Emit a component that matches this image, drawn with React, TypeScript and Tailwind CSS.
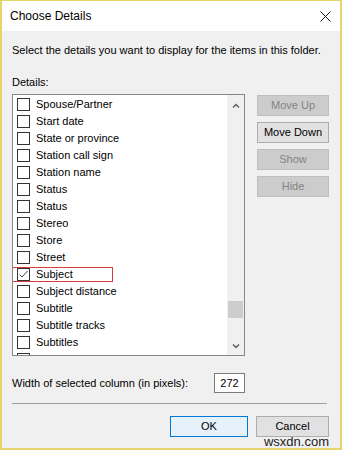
import { ReactNode } from 'react';

const items = [
  'Spouse/Partner',
  'Start date',
  'State or province',
  'Station call sign',
  'Station name',
  'Status',
  'Status',
  'Stereo',
  'Store',
  'Street',
  'Subject',
  'Subject distance',
  'Subtitle',
  'Subtitle tracks',
  'Subtitles',
  '',
];

function CheckBox({ checked }: { checked?: boolean }) {
  return (
    <span className="flex h-[13px] w-[13px] shrink-0 items-center justify-center border border-[#333333] bg-white">
      {checked ? (
        <svg width="11" height="11" viewBox="0 0 11 11">
          <path d="M1.5 5.5 L4 8 L9.5 2" fill="none" stroke="#444" strokeWidth="1" />
        </svg>
      ) : null}
    </span>
  );
}

function Button({ children, disabled, primary }: { children: ReactNode; disabled?: boolean; primary?: boolean }) {
  return (
    <div
      className={
        'flex h-[21px] items-center justify-center border text-[11px] ' +
        (disabled
          ? 'border-[#bfbfbf] bg-[#cccccc] text-[#838383]'
          : primary
            ? 'border-[#0078d7] bg-[#e5f1fb] text-black'
            : 'border-[#adadad] bg-[#e1e1e1] text-black')
      }
    >
      {children}
    </div>
  );
}

export default function App() {
  return (
    <div className="relative h-[450px] w-[342px] border-2 border-t border-[#e6d56a] bg-[#f0f0f0] font-['Liberation_Sans',Arial,sans-serif] text-black">
      <div className="flex h-[30px] items-center justify-between bg-white pl-[8px] pr-[9px]">
        <span className="text-[12px]">Choose Details</span>
        <svg width="11" height="11" viewBox="0 0 11 11">
          <path d="M0.5 0.5 L10.5 10.5 M10.5 0.5 L0.5 10.5" stroke="#111" strokeWidth="1" />
        </svg>
      </div>

      <div className="pl-[10px] pr-[11px]">
        <div className="mt-[10px] text-[11px] leading-[18px]">
          Select the details you want to display for the items in this folder.
        </div>
        <div className="mt-[14px] text-[11px] leading-[18px]">Details:</div>

        <div className="mt-[3px] flex gap-[12px]">
          <div className="flex h-[262px] w-[233px] border border-[#828790] bg-white">
            <div className="flex-1 overflow-hidden pt-[1px]">
              {items.map((it, i) => (
                <div key={i} className="relative flex h-[17px] items-center gap-[6px] pl-[4px] text-[11px]">
                  <CheckBox checked={it === 'Subject'} />
                  <span>{it}</span>
                  {it === 'Subject' ? (
                    <span className="absolute left-[-1px] top-[1px] h-[15px] w-[101px] border border-[#d93a3a]" />
                  ) : null}
                </div>
              ))}
            </div>
            <div className="flex w-[17px] flex-col items-center bg-[#f0f0f0]">
              <svg className="mt-[8px]" width="8" height="5" viewBox="0 0 8 5">
                <path d="M1 4.5 L4 1.5 L7 4.5" fill="none" stroke="#606060" strokeWidth="1.5" />
              </svg>
              <div className="mt-[193px] h-[17px] w-[15px] bg-[#cdcdcd]" />
              <svg className="mt-[26px]" width="8" height="5" viewBox="0 0 8 5">
                <path d="M1 0.5 L4 3.5 L7 0.5" fill="none" stroke="#606060" strokeWidth="1.5" />
              </svg>
            </div>
          </div>

          <div className="mt-[1px] flex w-[72px] flex-col gap-[6px]">
            <Button disabled>Move Up</Button>
            <Button>Move Down</Button>
            <Button disabled>Show</Button>
            <Button disabled>Hide</Button>
          </div>
        </div>

        <div className="mt-[17px] flex items-center">
          <span className="w-[202px] text-[11px]">Width of selected column (in pixels):</span>
          <div className="flex h-[20px] w-[31px] items-center justify-center border border-[#7a7a7a] bg-white text-[11px]">
            272
          </div>
        </div>

        <div className="mt-[10px] h-[1px] w-[315px] bg-[#a0a0a0]" />

        <div className="mt-[12px] flex justify-end gap-[8px]">
          <div className="w-[78px]">
            <Button primary>OK</Button>
          </div>
          <div className="w-[73px]">
            <Button>Cancel</Button>
          </div>
        </div>
      </div>

      <span className="absolute right-[11px] top-[433px] text-[13px] leading-[15px] text-[#222]">wsxdn.com</span>
    </div>
  );
}
